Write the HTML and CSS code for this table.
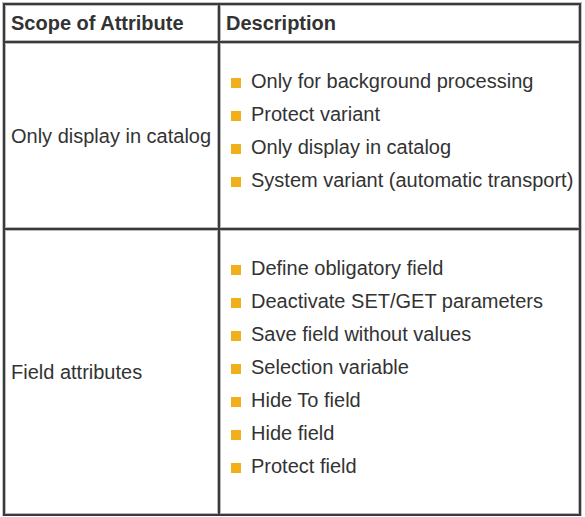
FILE: index.html
```html
<!DOCTYPE html>
<html>
<head>
<meta charset="utf-8">
<link rel="stylesheet" href="styles.css">
</head>
<body>
<table class="attr-table">
  <thead>
    <tr>
      <th class="col-scope">Scope of Attribute</th>
      <th class="col-desc">Description</th>
    </tr>
  </thead>
  <tbody>
    <tr>
      <td class="scope">Only display in catalog</td>
      <td class="desc">
        <ul class="bullets">
          <li>Only for background processing</li>
          <li>Protect variant</li>
          <li>Only display in catalog</li>
          <li>System variant (automatic transport)</li>
        </ul>
      </td>
    </tr>
    <tr>
      <td class="scope">Field attributes</td>
      <td class="desc">
        <ul class="bullets">
          <li>Define obligatory field</li>
          <li>Deactivate SET/GET parameters</li>
          <li>Save field without values</li>
          <li>Selection variable</li>
          <li>Hide To field</li>
          <li>Hide field</li>
          <li>Protect field</li>
        </ul>
      </td>
    </tr>
  </tbody>
</table>
</body>
</html>
```
FILE: styles.css
```css
html, body {
  margin: 0;
  padding: 0;
  background: #ffffff;
}
body {
  font-family: "Liberation Sans", Arial, sans-serif;
  font-size: 20px;
  color: #333333;
}
.attr-table {
  margin: 3px 0 0 3px;
  border-collapse: separate;
  border-spacing: 0;
  border: 1px solid #3a3a3a;
  box-shadow: 0 0 0 1px #c4c4c4;
}
.attr-table th,
.attr-table td {
  border: 1px solid #3a3a3a;
  box-shadow: inset 0 0 0 1px #b8b8b8;
  text-align: left;
}
.attr-table th {
  font-weight: bold;
  line-height: 24px;
  padding: 6px 6px;
  color: #333333;
}
.col-scope {
  width: 201px;
}
.col-desc {
  width: 346px;
}
.scope {
  vertical-align: middle;
  padding: 0 6px;
  line-height: 22px;
}
.desc {
  vertical-align: top;
  padding: 22px 6px 31px 6px;
}
.bullets {
  list-style: none;
  margin: 0;
  padding: 0 0 0 5px;
}
.bullets li {
  display: flex;
  align-items: center;
  line-height: 33px;
  white-space: nowrap;
}
.bullets li::before {
  content: "";
  width: 10px;
  height: 10px;
  background: #f0b01c;
  margin-right: 10px;
  flex: none;
  position: relative;
  top: 1px;
}
```
